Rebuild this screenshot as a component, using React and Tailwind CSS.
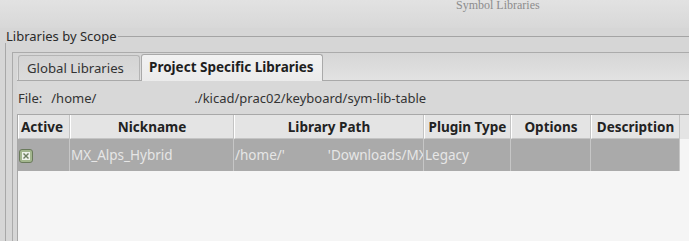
const columns = [
  { label: "Active", width: "w-[52px]" },
  { label: "Nickname", width: "w-[164px]" },
  { label: "Library Path", width: "w-[190px]" },
  { label: "Plugin Type", width: "w-[87px]" },
  { label: "Options", width: "w-[80px]" },
  { label: "Description", width: "w-[89px]" },
];

const CheckMark = () => (
  <div className="w-[14px] h-[14px] shrink-0 rounded-[3px] border border-[#6a7a5c] bg-[#a3b68e] flex items-center justify-center">
    <div className="w-[8px] h-[8px] bg-[#eef2ea] flex items-center justify-center">
      <svg width="6" height="6" viewBox="0 0 6 6">
        <path d="M1 1L5 5M5 1L1 5" stroke="#6d7d60" strokeWidth="1.4" strokeLinecap="square" />
      </svg>
    </div>
  </div>
);

export default function App() {
  return (
    <div className="w-[689px] h-[241px] overflow-hidden bg-[#d6d6d6] font-['Noto_Sans',sans-serif] text-[#2a2a2a] flex flex-col">
      {/* title bar, mostly cropped */}
      <div className="h-[28px] shrink-0 bg-gradient-to-b from-[#e2e2e2] to-[#d8d8d8]">
        <div className="ml-[456px] -mt-[2px] font-['Liberation_Serif',serif] text-[12px] text-[#8c8c8c] leading-[14px]">
          Symbol Libraries
        </div>
      </div>

      {/* group box */}
      <div className="flex items-center h-[14px] mt-[1px]">
        <span className="ml-[6px] text-[13px] leading-[14px] text-[#2a2a2a]">Libraries by Scope</span>
        <div className="flex-1 h-px bg-[#a4a4a4] ml-[1px] mt-[1px]"></div>
      </div>
      <div className="ml-[5px] flex-1 border-l border-[#a8a8a8] pt-[9px] flex flex-col">
        <div className="ml-[6px] flex-1 border-l border-t border-[#ababab] flex flex-col pl-[4px]">
          {/* tabs */}
          <div className="flex items-end h-[28px] bg-gradient-to-b from-[#d6d6d6] to-[#e2e2e2] border-b border-[#a9a9a9]">
            <div className="h-[25px] w-[122px] ml-[1px] border border-b-0 border-[#b4b4b4] rounded-t-[3px] bg-gradient-to-b from-[#d4d4d4] to-[#dcdcdc] flex items-center pl-[8px] pt-[1px] text-[13.2px] text-[#333]">
              Global Libraries
            </div>
            <div className="h-[27px] w-[182px] -mb-px ml-[1px] border border-b-0 border-[#a9a9a9] rounded-t-[3px] bg-gradient-to-b from-[#f2f2f2] to-[#ebebeb] flex items-center pl-[7px] pb-[1px] font-bold text-[13.5px] text-[#1e1e1e]">
              Project Specific Libraries
            </div>
          </div>

          {/* pane */}
          <div className="flex-1 flex flex-col bg-[#d8d8d8]">
            <div className="h-[33px] pt-[3px] flex items-center text-[13px] text-[#333]">
              <span className="ml-[1px]">File:</span>
              <span className="ml-[9px]">/home/</span>
              <span className="ml-[98px]">./kicad/prac02/keyboard/sym-lib-table</span>
            </div>

            <div className="flex-1 border-l border-t border-[#a8a8a8] bg-[#f5f5f5] flex flex-col">
              <div className="flex h-[24px] bg-[#e4e4e4]">
                {columns.map((col, i) => (
                  <div
                    key={col.label}
                    className={`${col.width} shrink-0 h-full border-r border-b border-[#c4c4c4] border-l border-l-white flex items-center pt-[1px] font-bold text-[13.5px] text-[#222] ${
                      i === 0 ? "justify-start pl-[2px]" : "justify-center"
                    }`}
                  >
                    {col.label}
                  </div>
                ))}
              </div>
              <div className="flex h-[32px]">
                {columns.map((col) => (
                  <div
                    key={col.label}
                    className={`${col.width} shrink-0 h-full bg-[#aaaaaa] border-r border-[#c6c6c6] flex items-center text-[13.5px] text-[#e6e6e6] overflow-hidden whitespace-nowrap`}
                  >
                    {col.label === "Active" && (
                      <div className="ml-[1px] mt-[1px] shrink-0">
                        <CheckMark />
                      </div>
                    )}
                    {col.label === "Nickname" && <span className="ml-[1px]">MX_Alps_Hybrid</span>}
                    {col.label === "Library Path" && (
                      <div className="flex ml-[1px]">
                        <span>/home/'</span>
                        <span className="ml-[43px]">'Downloads/MX</span>
                      </div>
                    )}
                    {col.label === "Plugin Type" && <span className="ml-[1px]">Legacy</span>}
                  </div>
                ))}
              </div>
            </div>
          </div>
        </div>
      </div>
    </div>
  );
}
